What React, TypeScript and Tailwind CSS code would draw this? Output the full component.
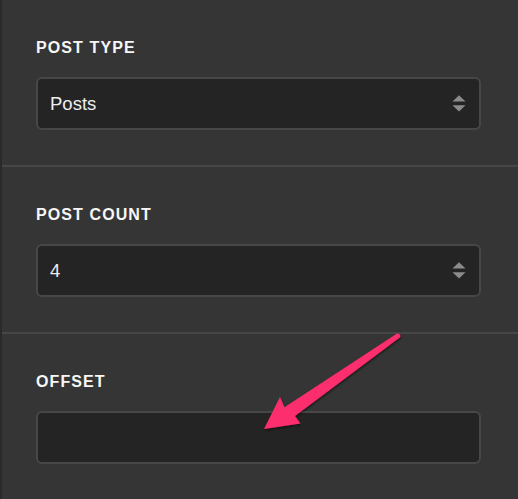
import React from "react";

type Field = {
  label: string;
  value: string;
  select: boolean;
};

const fields: Field[] = [
  { label: "POST TYPE", value: "Posts", select: true },
  { label: "POST COUNT", value: "4", select: true },
  { label: "OFFSET", value: "", select: false },
];

function SortIcon() {
  return (
    <svg width="14" height="17" viewBox="0 0 14 17" className="shrink-0">
      <path d="M0.5 6.6 L7 0.3 L13.5 6.6 Z" fill="#8b8b8b" />
      <path d="M0.5 10.2 L13.5 10.2 L7 16.6 Z" fill="#8b8b8b" />
    </svg>
  );
}

function FieldSection({ field }: { field: Field }) {
  return (
    <div className="border-b-2 border-[#464646] pl-[34px] pr-[37px] pt-[38px] pb-[35px]">
      <div className="text-[16px] leading-[20px] font-bold tracking-[1.1px] text-[#f7f7f7]">
        {field.label}
      </div>
      <div className="mt-[19px] flex h-[53px] items-center justify-between rounded-[6px] border-2 border-[#474747] bg-[#242424] pl-[12px] pr-[13px]">
        <span className="text-[18.5px] text-[#ededed]">{field.value}</span>
        {field.select && <SortIcon />}
      </div>
    </div>
  );
}

export default function App() {
  return (
    <div
      className="relative h-[499px] w-[518px] overflow-hidden border-l-2 border-[#2a2a2a] bg-[#353535]"
      style={{ fontFamily: '"Liberation Sans", Arial, sans-serif' }}
    >
      {fields.map((f) => (
        <FieldSection key={f.label} field={f} />
      ))}

      {/* annotation arrow */}
      <svg
        className="pointer-events-none absolute left-[-2px] top-0"
        width="518"
        height="499"
        viewBox="0 0 518 499"
      >
        <defs>
          <filter id="shadow" x="-20%" y="-20%" width="140%" height="140%">
            <feDropShadow dx="0.5" dy="1.5" stdDeviation="1.2" floodColor="#000" floodOpacity="0.55" />
          </filter>
        </defs>
        <path
          d="M397 333.6 Q399.5 333 400.4 335.4 Q400.6 337 399.4 337.8 L295 416 L300.5 423.5 L264 429 L280 397 L284.5 407.2 Z"
          fill="#fd2d6d"
          filter="url(#shadow)"
        />
      </svg>
    </div>
  );
}
